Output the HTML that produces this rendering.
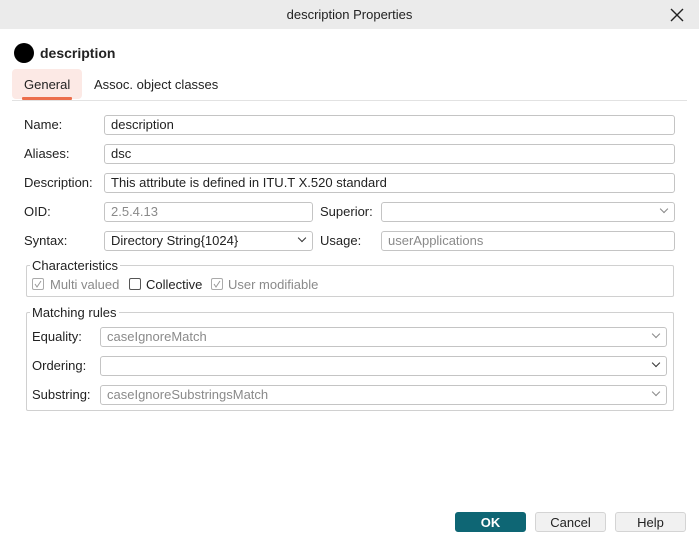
<!DOCTYPE html>
<html><head><style>
body{margin:0;width:699px;height:545px;background:#fff;font-family:"Liberation Sans",sans-serif;font-size:13px;color:#222;position:relative;overflow:hidden}
.a{position:absolute}
.t{position:absolute;line-height:16px;white-space:nowrap}
.in{position:absolute;border:1px solid #c4c4c4;border-radius:3px;box-sizing:border-box;height:20px;line-height:18px;padding-left:6px;background:#fff;white-space:nowrap}
.dis{color:#8a8a8a}
.chev{position:absolute;right:7px;top:3px;width:5px;height:5px;border-right:1px solid #888;border-bottom:1px solid #888;transform:rotate(45deg)}
.dk .chev{border-color:#333}
.grp{position:absolute;border:1px solid #d0d0d0;border-radius:2px;box-sizing:border-box}
.lg{position:absolute;background:#fff;padding:0 2px;line-height:14px}
.cb{position:absolute;width:12px;height:12px;border:1px solid #aaa;border-radius:2px;box-sizing:border-box}
.btn{position:absolute;height:20px;line-height:20px;text-align:center;width:71px;border:1px solid #d4d4d4;border-radius:3px;box-sizing:border-box;background:#f1f1f1}
</style></head><body>
<div class="a" style="left:0;top:0;width:699px;height:29px;background:#ebebeb"></div>
<div class="t" style="left:0;width:699px;text-align:center;top:7px">description Properties</div>
<svg class="a" style="left:670px;top:8px" width="14" height="14"><path d="M1 1L13 13M13 1L1 13" stroke="#222" stroke-width="1.4"/></svg>
<div class="a" style="left:14px;top:43px;width:20px;height:20px;border-radius:50%;background:#000"></div>
<div class="t" style="left:40px;top:45px;font-weight:bold;font-size:14px">description</div>
<div class="a" style="left:12px;top:69px;width:70px;height:30px;background:#fce9e5;border-radius:4px"></div>
<div class="a" style="left:22px;top:97px;width:50px;height:3px;background:#ec6e4c;border-radius:1px"></div>
<div class="t" style="left:24px;top:77px">General</div>
<div class="t" style="left:94px;top:77px">Assoc. object classes</div>
<div class="a" style="left:12px;top:100px;width:675px;height:1px;background:#e2e2e2"></div>

<div class="t" style="left:24px;top:117px">Name:</div>
<div class="in" style="left:104px;top:115px;width:571px">description</div>
<div class="t" style="left:24px;top:146px">Aliases:</div>
<div class="in" style="left:104px;top:144px;width:571px">dsc</div>
<div class="t" style="left:24px;top:175px">Description:</div>
<div class="in" style="left:104px;top:173px;width:571px">This attribute is defined in ITU.T X.520 standard</div>
<div class="t" style="left:24px;top:204px">OID:</div>
<div class="in dis" style="left:104px;top:202px;width:209px">2.5.4.13</div>
<div class="t" style="left:320px;top:204px">Superior:</div>
<div class="in" style="left:381px;top:202px;width:294px"><span class="chev"></span></div>
<div class="t" style="left:24px;top:233px">Syntax:</div>
<div class="in dk" style="left:104px;top:231px;width:209px">Directory String{1024}<span class="chev"></span></div>
<div class="t" style="left:320px;top:233px">Usage:</div>
<div class="in dis" style="left:381px;top:231px;width:294px">userApplications</div>

<div class="grp" style="left:26px;top:265px;width:648px;height:32px"></div>
<div class="lg" style="left:30px;top:259px">Characteristics</div>
<div class="cb" style="left:32px;top:278px"></div><svg class="a" style="left:33px;top:279px" width="10" height="10"><path d="M2 5L4 8L8 2" stroke="#999" fill="none"/></svg>
<div class="t dis" style="left:50px;top:277px">Multi valued</div>
<div class="cb" style="left:129px;top:278px;border-color:#555"></div>
<div class="t" style="left:146px;top:277px">Collective</div>
<div class="cb" style="left:211px;top:278px"></div><svg class="a" style="left:212px;top:279px" width="10" height="10"><path d="M2 5L4 8L8 2" stroke="#999" fill="none"/></svg>
<div class="t dis" style="left:228px;top:277px">User modifiable</div>

<div class="grp" style="left:26px;top:312px;width:648px;height:99px"></div>
<div class="lg" style="left:30px;top:306px">Matching rules</div>
<div class="t" style="left:32px;top:329px">Equality:</div>
<div class="in dis" style="left:100px;top:327px;width:567px">caseIgnoreMatch<span class="chev"></span></div>
<div class="t" style="left:32px;top:358px">Ordering:</div>
<div class="in dk" style="left:100px;top:356px;width:567px"><span class="chev"></span></div>
<div class="t" style="left:32px;top:387px">Substring:</div>
<div class="in dis" style="left:100px;top:385px;width:567px">caseIgnoreSubstringsMatch<span class="chev"></span></div>

<div class="btn" style="left:455px;top:512px;background:#0e6674;border-color:#0e6674;color:#fff;font-weight:bold">OK</div>
<div class="btn" style="left:535px;top:512px">Cancel</div>
<div class="btn" style="left:615px;top:512px">Help</div>
</body></html>
